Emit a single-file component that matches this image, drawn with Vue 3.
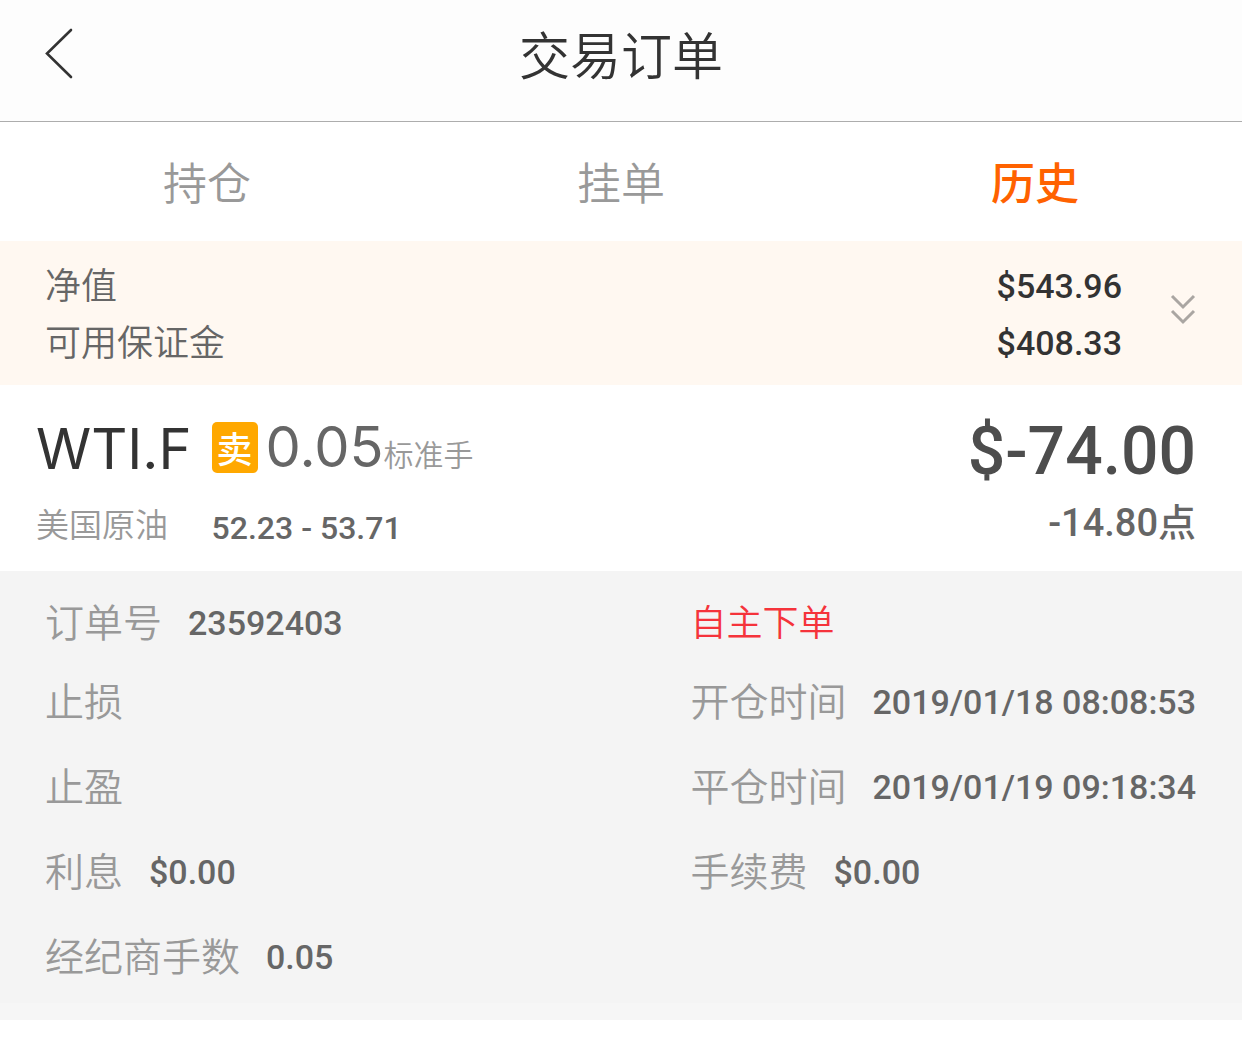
<template>
  <div class="page">
    <header class="nav">
      <button class="back" type="button" aria-label="返回">
        <svg viewBox="0 0 30 52" width="30" height="52">
          <path d="M27 3 L3 26.5 L27 50" fill="none" stroke="#333" stroke-width="2.6" stroke-linecap="round" />
        </svg>
      </button>
      <h1 class="nav-title">交易订单</h1>
    </header>

    <nav class="tabs">
      <button
        v-for="tab in tabs"
        :key="tab"
        type="button"
        class="tab"
        :class="{ active: tab === activeTab }"
        @click="activeTab = tab"
      >
        {{ tab }}
      </button>
    </nav>

    <section class="summary">
      <dl class="summary-list">
        <div v-for="row in summary" :key="row.label" class="summary-row">
          <dt>{{ row.label }}</dt>
          <dd>{{ row.value }}</dd>
        </div>
      </dl>
      <button class="expand" type="button" aria-label="展开">
        <svg viewBox="0 0 26 32" width="26" height="32">
          <path d="M2 3 L13 14 L24 3 M2 18 L13 29 L24 18" fill="none" stroke="#aaa6a2" stroke-width="3" />
        </svg>
      </button>
    </section>

    <section class="order">
      <div class="order-symbol">
        <div class="line-main symbol">{{ order.symbol }}</div>
        <div class="line-sub name">{{ order.name }}</div>
      </div>
      <div class="order-volume">
        <div class="line-main volume">
          <span class="badge">{{ order.side }}</span>
          <span class="lots">{{ order.lots }}</span>
          <span class="unit">标准手</span>
        </div>
        <div class="line-sub prices">{{ order.open }} - {{ order.close }}</div>
      </div>
      <div class="order-profit">
        <div class="line-main profit">{{ order.profit }}</div>
        <div class="line-sub points">{{ order.points }}点</div>
      </div>
    </section>

    <section class="detail">
      <dl class="detail-col">
        <div v-for="item in leftItems" :key="item.label" class="detail-row">
          <dt>{{ item.label }}</dt>
          <dd>{{ item.value }}</dd>
        </div>
      </dl>
      <dl class="detail-col">
        <div class="detail-row">
          <dt class="self-order">自主下单</dt>
        </div>
        <div v-for="item in rightItems" :key="item.label" class="detail-row">
          <dt>{{ item.label }}</dt>
          <dd>{{ item.value }}</dd>
        </div>
      </dl>
    </section>
  </div>
</template>

<script setup>
import { ref } from 'vue';

const tabs = ['持仓', '挂单', '历史'];
const activeTab = ref('历史');

// 账户概览
const summary = ref([
  { label: '净值', value: '$543.96' },
  { label: '可用保证金', value: '$408.33' },
]);

const order = ref({
  symbol: 'WTI.F',
  name: '美国原油',
  side: '卖',
  lots: '0.05',
  open: '52.23',
  close: '53.71',
  profit: '$-74.00',
  points: '-14.80',
});

// 订单明细, 左右两列
const leftItems = ref([
  { label: '订单号', value: '23592403' },
  { label: '止损', value: '' },
  { label: '止盈', value: '' },
  { label: '利息', value: '$0.00' },
  { label: '经纪商手数', value: '0.05' },
]);

const rightItems = ref([
  { label: '开仓时间', value: '2019/01/18 08:08:53' },
  { label: '平仓时间', value: '2019/01/19 09:18:34' },
  { label: '手续费', value: '$0.00' },
]);
</script>

<style>
body {
  margin: 0;
  background: #fff;
}
</style>

<style scoped>
.page {
  font-family: 'Noto Sans CJK SC', sans-serif;
  font-weight: 350;
  color: #666;
  white-space: nowrap;
}

button {
  padding: 0;
  border: 0;
  background: none;
  font: inherit;
  color: inherit;
  cursor: pointer;
}

svg {
  display: block;
}

dl,
dd {
  margin: 0;
}

.nav {
  display: grid;
  grid-template-columns: 1fr auto 1fr;
  align-items: center;
  padding: 18px 44px 33px;
  background: #fdfdfd;
  border-bottom: 1px solid #adadad;
}

.back {
  justify-self: start;
}

.nav-title {
  margin: 0;
  font-size: 51px;
  font-weight: 350;
  line-height: 70px;
  color: #333;
}

.tabs {
  display: flex;
  padding: 24px 0 25px;
}

.tab {
  flex: 1;
  font-size: 44px;
  line-height: 70px;
  color: #999;
}

.tab.active {
  font-weight: 500;
  color: #ff6200;
}

.summary {
  display: flex;
  align-items: center;
  gap: 48px;
  padding: 14px 46px 16px 45px;
  background: #fff8f1;
}

.summary-list {
  flex: 1;
}

.summary-row {
  display: flex;
  justify-content: space-between;
  font-size: 36px;
  line-height: 57px;
}

.summary-row dd,
.detail-row dd,
.prices,
.profit,
.points {
  font-family: Roboto, 'Noto Sans CJK SC', sans-serif;
  font-weight: 500;
}

.summary-row dd {
  padding-top: 6px;
  font-size: 34px;
  line-height: 51px;
  color: #333;
}

.expand {
  padding-bottom: 6px;
}

.order {
  display: flex;
  padding: 24px 46px 18px 36px;
}

.order-symbol {
  margin-right: 20px;
}

.order-profit {
  flex: 1;
  text-align: right;
}

.line-main {
  box-sizing: border-box;
  height: 80px;
  margin-bottom: 4px;
  line-height: 80px;
}

.line-sub {
  line-height: 60px;
}

.symbol,
.lots {
  font-family: Inter, 'Noto Sans CJK SC', sans-serif;
  font-size: 56px;
  font-weight: 400;
}

.symbol {
  color: #333;
}

.name {
  font-size: 33px;
  color: #999;
}

.volume {
  display: flex;
  align-items: center;
  padding-bottom: 4px;
}

.badge {
  margin-right: 8px;
  padding: 0 5px;
  border-radius: 5px;
  background: #ffa800;
  color: #fff;
  font-size: 36px;
  font-weight: 500;
  line-height: 51px;
}

.unit {
  padding-top: 12px;
  font-size: 30px;
  color: #999;
}

.prices {
  padding-top: 10px;
  font-size: 32px;
  line-height: 50px;
}

.profit {
  padding-top: 6px;
  font-size: 66px;
  line-height: 74px;
  color: #4d4d4d;
}

.points {
  font-size: 38px;
}

.detail {
  display: flex;
  justify-content: space-between;
  padding: 17px 46px 17px 45px;
  background: #f4f4f4;
  border-bottom: 17px solid #f6f6f6;
}

.detail-col {
  display: flex;
  flex-direction: column;
  gap: 21px;
}

.detail-row {
  display: flex;
  gap: 26px;
  line-height: 64px;
}

.detail-row:first-child {
  margin-bottom: -6px;
}

.detail-row dt {
  font-size: 39px;
  color: #999;
}

.detail-row dd {
  padding-top: 6px;
  font-size: 34px;
  line-height: 58px;
}

.detail-row .self-order {
  font-size: 36px;
  color: #f5333b;
}
</style>
